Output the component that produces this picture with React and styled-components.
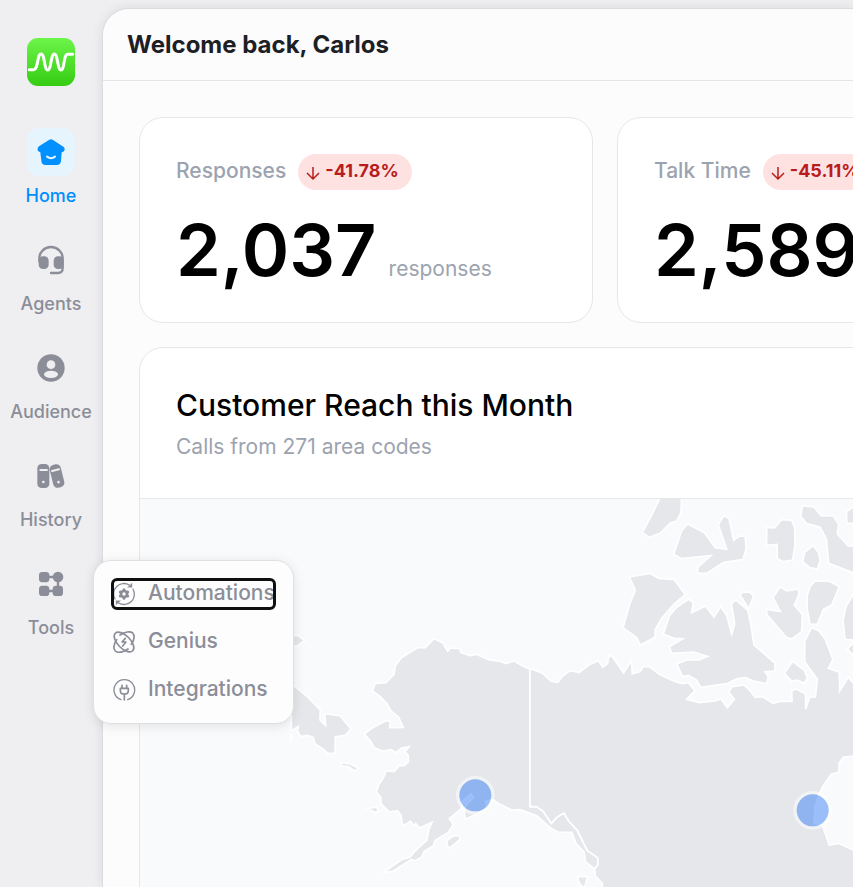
import React from 'react';
import styled, { createGlobalStyle } from 'styled-components';

const GlobalStyle = createGlobalStyle`
  * {
    box-sizing: border-box;
  }

  body {
    margin: 0;
    overflow: hidden;
    background: #efeff1;
    font-family: Inter, "Liberation Sans", sans-serif;
  }

  h1, h2, p {
    margin: 0;
  }
`

const Shell = styled.div`
  display: flex;
  height: 100vh;
`

const Sidebar = styled.aside`
  display: flex;
  flex-direction: column;
  align-items: center;
  flex: none;
  width: 102px;
  padding-top: 38px;
  gap: 42px;
`

const Nav = styled.nav`
  display: flex;
  flex-direction: column;
  align-items: center;
  gap: 26px;
`

const NavItem = styled.div`
  position: relative;
`

const NavLink = styled.a`
  display: flex;
  flex-direction: column;
  align-items: center;
  gap: 6px;
  font-size: 18px;
  font-weight: 500;
  line-height: 28px;
  text-decoration: none;
  color: ${props => props.$active ? '#0090ff' : '#8b8d98'};
`

const IconBox = styled.span`
  display: flex;
  align-items: center;
  justify-content: center;
  width: 48px;
  height: 48px;
  border-radius: 12px;
  background: ${props => props.$active ? '#e6f4fe' : 'transparent'};
`

const Menu = styled.div`
  position: absolute;
  top: 0;
  left: 66px;
  z-index: 2;
  display: flex;
  flex-direction: column;
  align-items: flex-start;
  gap: 18px;
  padding: 18px;
  border: 1px solid #e0e0e3;
  border-radius: 18px;
  background: #fdfdfd;
  box-shadow: 0 2px 12px rgba(0, 0, 0, 0.1);
`

const MenuButton = styled.button`
  display: flex;
  align-items: center;
  gap: 12px;
  height: 30px;
  padding: 0;
  border: none;
  border-radius: 5px;
  background: none;
  font-family: inherit;
  font-size: 21px;
  font-weight: 500;
  line-height: 30px;
  color: #8b8d98;
  outline: ${props => props.$focused ? '3px solid #101010' : 'none'};
  outline-offset: -2px;

  svg {
    flex: none;
  }

  span {
    margin-top: -2px;
  }
`

const Panel = styled.main`
  flex: 1;
  min-width: 0;
  margin-top: 8px;
  overflow: hidden;
  border: 1px solid #dcdce0;
  border-width: 1px 0 0 1px;
  border-radius: 27px 0 0 0;
  background: #fcfcfd;
  box-shadow: 0 0 12px rgba(0, 0, 0, 0.09);
`

const Header = styled.header`
  display: flex;
  align-items: center;
  height: 72px;
  padding: 0 24px;
  border-bottom: 1px solid #e4e4e9;

  h1 {
    font-size: 24px;
    font-weight: 700;
    line-height: 36px;
    color: #1c2024;
  }
`

const Content = styled.div`
  display: flex;
  flex-direction: column;
  gap: 24px;
  padding: 36px;
`

const Row = styled.div`
  display: flex;
  gap: 24px;
`

const Card = styled.section`
  flex: 1 0 ${props => props.$wide ? '932px' : '454px'};
  overflow: hidden;
  border: 1px solid #e5e7eb;
  border-radius: 24px;
  background: #fff;
`

const CardBody = styled.div`
  padding: 36px;
`

const StatHead = styled.div`
  display: flex;
  align-items: flex-start;
  gap: 12px;
  margin-bottom: 24px;
  font-size: 21px;
  font-weight: 500;
  line-height: 34px;
  color: #9ca3af;
`

const Badge = styled.span`
  display: flex;
  align-items: center;
  gap: 3px;
  height: 36px;
  padding: 0 13px 2px 6px;
  border-radius: 18px;
  background: #fee2e2;
  font-size: 18px;
  font-weight: 700;
  color: #b91c1c;

  svg {
    margin-top: 3px;
  }
`

const StatValue = styled.div`
  display: flex;
  align-items: baseline;
  gap: 12px;
  line-height: 72px;

  strong {
    font-size: 72px;
    font-weight: 600;
    color: #000;
  }

  span {
    font-size: 21px;
    line-height: 30px;
    color: #9ca3af;
  }
`

const MapHead = styled(CardBody)`
  border-bottom: 1px solid #e5e7eb;

  h2 {
    font-size: 30px;
    font-weight: 500;
    line-height: 42px;
    color: #000;
  }

  p {
    margin-top: 6px;
    font-size: 21px;
    line-height: 30px;
    color: #9ca3af;
  }
`

const MapSvg = styled.svg`
  display: block;
  width: 100%;
  height: auto;
  background: #f9fafc;
`

const Logo = () => (
  <svg width="48" height="48" viewBox="0 0 144 144" role="img" aria-label="Logo">
    <defs>
      <linearGradient id="logo" x1="0" y1="0" x2="0" y2="1">
        <stop offset="0" stopColor="#6cf54a" />
        <stop offset="1" stopColor="#35cc12" />
      </linearGradient>
    </defs>
    <rect width="144" height="144" rx="33" fill="url(#logo)" />
    <path
      d="M7 95H20C34 95 30 48 42 48S51 96 62 96S71 48 82 48S91 96 102 96S109 49 122 49H137"
      fill="none" stroke="#fff" strokeWidth="9" strokeLinecap="round"
    />
  </svg>
)

const NavSvg = ({ children }) => (
  <svg width="32" height="32" viewBox="0 0 96 96" fill="currentColor" aria-hidden="true">{children}</svg>
)

const HomeIcon = () => (
  <NavSvg>
    <path d="M43 11Q48 8 53 11L85 32Q92 38 87 45Q84 49 80 49L78 74Q77 87 65 87H32Q20 87 19 74L16 49Q10 48 8 43Q6 36 12 31Z" />
    <path d="M36 62Q48 71 60 62" fill="none" stroke="#e6f4fe" strokeWidth="6" strokeLinecap="round" />
  </NavSvg>
)

const AgentsIcon = () => (
  <NavSvg>
    <path d="M13 52V43a35 34 0 0 1 70 0V73q0 14-14 14H48" fill="none" stroke="currentColor" strokeWidth="7" strokeLinecap="round" />
    <rect x="11" y="37" width="30" height="38" rx="13" />
    <rect x="56" y="37" width="30" height="38" rx="13" />
  </NavSvg>
)

const AudienceIcon = () => (
  <NavSvg>
    <circle cx="48" cy="48" r="41" />
    <circle cx="48" cy="38" r="13" fill="#efeff1" />
    <ellipse cx="48" cy="67" rx="21" ry="11" fill="#efeff1" />
  </NavSvg>
)

const HistoryIcon = () => (
  <NavSvg>
    <rect x="7" y="12" width="36" height="72" rx="13" />
    <path d="M16 30H36" stroke="#efeff1" strokeWidth="6" strokeLinecap="round" />
    <circle cx="25" cy="66" r="4" fill="#efeff1" />
    <g transform="rotate(-14 66 48)">
      <rect x="49" y="13" width="34" height="70" rx="13" />
      <path d="M55 30H77" stroke="#efeff1" strokeWidth="6" strokeLinecap="round" />
      <circle cx="66" cy="67" r="4" fill="#efeff1" />
    </g>
  </NavSvg>
)

const ToolsIcon = () => (
  <NavSvg>
    <rect x="12" y="12" width="31" height="31" rx="10" />
    <circle cx="69" cy="27" r="16" />
    <rect x="12" y="53" width="31" height="31" rx="10" />
    <rect x="53" y="53" width="31" height="31" rx="10" />
    <path d="M40 27H56M40 69H56M69 40V56" stroke="currentColor" strokeWidth="7" />
  </NavSvg>
)

const MenuSvg = ({ children }) => (
  <svg
    width="24" height="24" viewBox="0 0 72 72" fill="none" stroke="currentColor"
    strokeWidth="5" strokeLinecap="round" strokeLinejoin="round" aria-hidden="true"
  >
    {children}
  </svg>
)

const AutomationsIcon = () => (
  <MenuSvg>
    <path d="M52 9A31 31 0 0 0 9 51M20 63A31 31 0 0 0 63 21" strokeWidth="4" />
    <path d="M60 4V16H47ZM12 68V56H25Z" fill="currentColor" strokeWidth="1" />
    <circle cx="36" cy="36" r="9" strokeWidth="8" />
    <path d="M36 23V25M36 47V49M25 30L26 30M46 42L47 42M25 42L26 42M46 30L47 30" strokeWidth="9" />
  </MenuSvg>
)

const GeniusIcon = () => (
  <MenuSvg>
    <ellipse cx="36" cy="36" rx="37" ry="19" transform="rotate(45 36 36)" />
    <path
      d="M24 15C38 5 55 3 62 9C69 17 66 31 58 43M48 57C34 67 17 70 10 63C3 55 6 41 14 29"
    />
    <path d="M40 25L30 36H42L32 48" />
  </MenuSvg>
)

const IntegrationsIcon = () => (
  <MenuSvg>
    <path d="M27 65A31 31 0 1 1 47 65" strokeWidth="4" />
    <path d="M25 31H49V38Q49 48 37 48Q25 48 25 38ZM30 22V30M44 22V30M37 48V66" strokeWidth="5" />
  </MenuSvg>
)

const ArrowDown = () => (
  <svg width="18" height="18" viewBox="0 0 18 18" fill="none" stroke="currentColor" strokeWidth="1.5" aria-hidden="true">
    <path d="M9 3V15M3 9L9 15L15 9" />
  </svg>
)

const navItems = [
  { label: 'Home', Icon: HomeIcon, active: true },
  { label: 'Agents', Icon: AgentsIcon },
  { label: 'Audience', Icon: AudienceIcon },
  { label: 'History', Icon: HistoryIcon },
  { label: 'Tools', Icon: ToolsIcon, menu: true },
]

const menuItems = [
  { label: 'Automations', Icon: AutomationsIcon, focused: true },
  { label: 'Genius', Icon: GeniusIcon },
  { label: 'Integrations', Icon: IntegrationsIcon },
]

const stats = [
  { label: 'Responses', change: '-41.78%', value: '2,037', unit: 'responses' },
  { label: 'Talk Time', change: '-45.11%', value: '2,589' },
]

const west = [
  // Alaska with the panhandle
  '462,56 488,68 503,94 511,84 541,86 542,97 570,107 589,103 626,119 665,125 677,131 702,123 728,138 750,148 750,560 769,560 789,573 814,610 830,592 852,579 866,603 892,631 922,692 953,713 954,734 944,747 935,740 917,726 912,696 888,670 876,637 833,636 813,625 770,587 720,569 695,570 660,553 638,538 616,545 620,562 590,583 555,598 552,563 580,532 573,521 545,545 545,565 508,596 520,613 505,637 465,662 460,677 432,695 425,712 405,722 395,718 340,753 310,758 366,718 390,712 403,695 441,660 447,627 456,607 430,619 418,623 407,610 402,618 392,604 368,618 363,587 353,572 328,576 303,551 302,531 289,515 296,495 312,470 318,452 342,455 358,437 373,437 386,424 384,404 374,396 387,380 365,384 347,398 334,389 308,393 283,383 272,364 253,342 278,323 318,302 330,303 329,323 370,322 356,292 333,273 320,250 300,229 277,213 286,190 318,188 342,163 346,137 364,113 415,82 435,84',
  // Chukotka
  '34,190 42,197 80,228 121,270 120,300 137,317 134,281 180,287 213,327 196,346 166,350 165,400 144,400 128,386 105,372 100,352 82,346 63,350 52,333 55,320 34,332',
  '32,340 38,352 31,370',
  '500,662 520,648 535,646 542,657 510,684 502,678',
  '262,566 290,561 295,575 285,577',
  '182,427 212,432 236,445 224,453 205,440 186,438',
  '20,44 55,47 74,62 52,78 20,78',
]

const mainland = [
  '30,86 65,98 93,123 113,128 128,108 151,92 178,97 206,75 235,62 248,82 263,70 267,45 277,50 311,98 334,62 337,102 361,95 369,80 388,80 418,103 462,124 487,131 505,128 525,152 500,178 537,188 585,183 603,177 622,203 643,178 626,155 637,140 672,135 690,152 706,172 728,170 759,190 780,184 816,184 815,153 828,146 857,163 857,207 870,170 886,171 892,118 854,65 854,3 875,-37 896,-28 916,-2 939,58 925,85 958,97 959,153 985,112 1010,140 1600,140 1600,348 999,348 970,352 957,370 957,397 935,402 912,433 897,462 885,500 882,550 907,556 928,615 955,610 999,630 1600,700 1600,1000 247,1000 247,730 226,708 224,687 234,674 233,653 202,632 172,571 146,543 132,519 110,532 94,550 69,513 49,500 30,500',
  '172,710 203,710 193,745 178,730',
]

const islands = [
  '187,10 245,10 243,68 229,94 211,99 180,130 149,142 127,128 155,75',
  '263,102 313,128 346,173 380,178 355,104 371,77 387,85 401,151 418,138 436,139 438,178 429,208 370,218 320,250 293,250 293,232 333,197 245,206 221,193 245,122',
  '500,112 523,114 545,89 575,91 584,113 585,165 578,210 550,215 532,206 531,163 500,166',
  '607,47 642,51 663,77 700,78 716,103 712,132 745,168 800,170 800,262 759,248 686,220 679,146 660,112 620,101 602,79',
  '740,65 759,52 800,40 800,100 740,100',
  '640,166 655,187 661,211 652,237 630,233 608,215 614,187',
  '88,261 149,250 176,265 222,268 256,314 222,342 185,385 166,418 165,442 121,465 110,443 69,413 90,340 106,300',
  '266,327 280,338 275,368 317,348 342,381 362,350 380,376 395,433 404,402 394,340 408,330 443,360 452,400 462,465 525,519 525,543 495,545 505,560 500,581 460,573 437,563 412,566 381,581 302,592 290,570 265,556 248,560 230,522 262,510 296,510 323,499 280,486 215,490 208,470 248,446 222,445 190,432 208,378 230,352',
  '420,315 427,307 448,306 461,318 446,356',
  '540,291 560,303 595,297 597,312 583,345 607,373 605,425 575,447 558,441 500,373 500,358 541,364 519,323',
  '645,273 688,274 718,290 695,345 670,358 652,403 630,402 621,352 622,315 630,290',
  '759,315 738,350 729,392 735,448 800,452 800,315',
  '800,430 759,460 742,477 759,495 800,500',
  '578,514 613,541 623,565 612,580 592,570 575,573 553,550',
]

const Land = ({ shapes, x = 0, y = 0 }) => (
  <g transform={`translate(${x} ${y})`}>
    {shapes.map(points => <polygon key={points} points={points} />)}
  </g>
)

const ReachMap = () => (
  <MapSvg viewBox="-420 -363 2790 1320" role="img" aria-label="Map of calls by area code">
    <g fill="#e5e7eb" stroke="#fff" strokeWidth="5">
      <Land shapes={west} />
      <Land shapes={mainland} x={720} y={60} />
      <Land shapes={islands} x={960} y={-390} />
    </g>
    {[[586, 526], [1598, 571]].map(([cx, cy]) => (
      <g key={cx}>
        <circle cx={cx} cy={cy} r="53" fill="none" stroke="#fff" strokeOpacity="0.5" strokeWidth="10" />
        <circle cx={cx} cy={cy} r="48" fill="#3b82f6" fillOpacity="0.5" />
      </g>
    ))}
  </MapSvg>
)

const App = () => {
  return (
    <>
      <GlobalStyle />
      <Shell>
        <Sidebar>
          <Logo />
          <Nav>
            {navItems.map(({ label, Icon, active, menu }) => (
              <NavItem key={label}>
                <NavLink href="#" $active={active}>
                  <IconBox $active={active}><Icon /></IconBox>
                  {label}
                </NavLink>
                {menu && (
                  <Menu>
                    {menuItems.map(item => (
                      <MenuButton key={item.label} type="button" $focused={item.focused}>
                        <item.Icon />
                        <span>{item.label}</span>
                      </MenuButton>
                    ))}
                  </Menu>
                )}
              </NavItem>
            ))}
          </Nav>
        </Sidebar>
        <Panel>
          <Header>
            <h1>Welcome back, Carlos</h1>
          </Header>
          <Content>
            <Row>
              {stats.map(stat => (
                <Card key={stat.label}>
                  <CardBody>
                    <StatHead>
                      {stat.label}
                      <Badge><ArrowDown />{stat.change}</Badge>
                    </StatHead>
                    <StatValue>
                      <strong>{stat.value}</strong>
                      {stat.unit && <span>{stat.unit}</span>}
                    </StatValue>
                  </CardBody>
                </Card>
              ))}
            </Row>
            <Row>
              <Card $wide>
                <MapHead>
                  <h2>Customer Reach this Month</h2>
                  <p>Calls from 271 area codes</p>
                </MapHead>
                <ReachMap />
              </Card>
            </Row>
          </Content>
        </Panel>
      </Shell>
    </>
  )
}

export default App;
